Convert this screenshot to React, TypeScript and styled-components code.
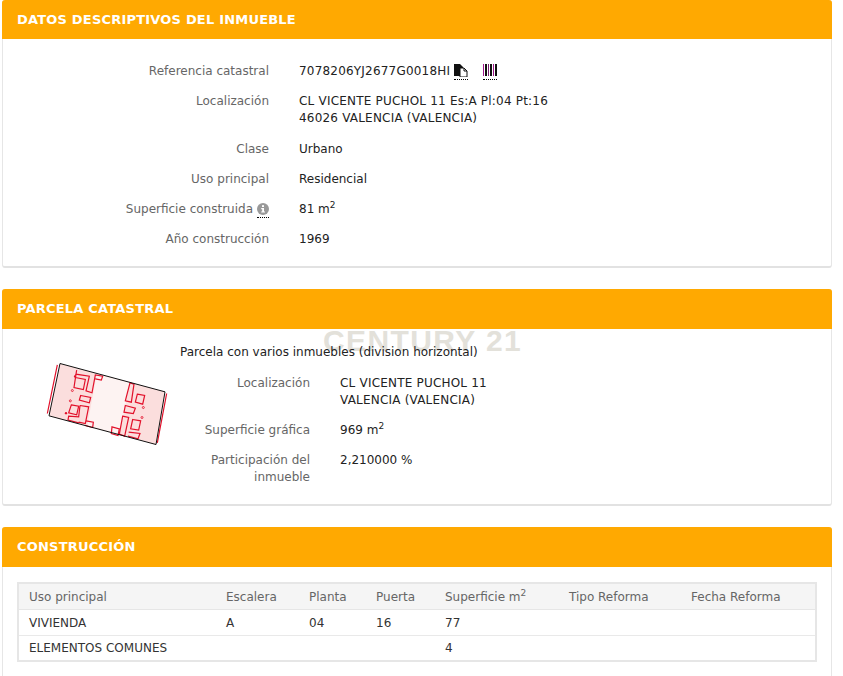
import React from "react";
import styled, { createGlobalStyle } from "styled-components";

const Global = createGlobalStyle`
  html, body { margin: 0; padding: 0; background: #fff; }
  body { font-family: "DejaVu Sans", Verdana, sans-serif; font-size: 12px; color: #222; }
  #root { overflow: hidden; height: 676px; }
`;
const Page = styled.div`
  position: relative;
  width: 830px;
  margin-left: 2px;
  display: flex;
  flex-direction: column;
  gap: 21px;
`;
const Card = styled.section<{ $h: number }>`
  height: ${(p) => p.$h}px;
  box-sizing: border-box;
  background: #fff;
  border: 1px solid #e6e6e6;
  border-top: 0;
  border-bottom: 2px solid #e2e2e2;
  border-radius: 3px;
  flex: none;
`;
const Header = styled.h2<{ $h: number }>`
  margin: 0 -1px;
  height: ${(p) => p.$h}px;
  background: #ffa901;
  color: #fff;
  font-size: 13px;
  font-weight: 700;
  letter-spacing: 0.2px;
  line-height: ${(p) => p.$h}px;
  padding-left: 15px;
  border-radius: 3px 3px 0 0;
`;
const Rows = styled.div<{ $left: number; $top: number; $label: number }>`
  display: grid;
  grid-template-columns: ${(p) => p.$label}px 1fr;
  column-gap: 30px;
  row-gap: 13px;
  padding: ${(p) => p.$top}px 0 0 ${(p) => p.$left}px;
  line-height: 17px;
`;
const Label = styled.div`
  color: #666;
  text-align: right;
`;
const Value = styled.div`
  color: #222;
  white-space: nowrap;
`;
const Caps = styled.span`
  letter-spacing: 0.2px;
`;
const Address = styled(Value)`
  letter-spacing: 0.2px;
  padding-bottom: 1px;
`;
const RefRow = styled.span`
  display: inline-flex;
  align-items: center;
`;
const IconLink = styled.span<{ $ml: number }>`
  display: inline-flex;
  margin-left: ${(p) => p.$ml}px;
  padding-bottom: 2px;
  border-bottom: 1px dotted #000;
  height: 13px;
`;
const Sup = styled.sup`
  font-size: 9px;
  line-height: 0;
`;
const InfoTip = styled.span`
  display: inline-flex;
  margin-left: 4px;
  vertical-align: -2px;
  padding-bottom: 2px;
  border-bottom: 1px dotted #000;
`;
const ParcelBody = styled.div`
  display: flex;
  align-items: flex-start;
`;
const MapBox = styled.div`
  width: 177px;
  flex: none;
  padding: 31px 0 0 42px;
  box-sizing: border-box;
`;
const ParcelText = styled.div`
  flex: 1;
  padding-top: 15px;
`;
const Note = styled.div`
  position: relative;
  z-index: 1;
  line-height: 17px;
  margin-bottom: 14px;
  color: #222;
`;
const Watermark = styled.div`
  position: absolute;
  left: 321px;
  top: 324px;
  font-family: "Liberation Sans", Arial, sans-serif;
  font-weight: 700;
  font-size: 30px;
  line-height: 34px;
  letter-spacing: 1.4px;
  color: #e3e1da;
  white-space: nowrap;
  pointer-events: none;
`;
const TableWrap = styled.div`
  padding: 15px 14px 0;
`;
const Table = styled.table`
  width: 800px;
  border-collapse: collapse;
  table-layout: fixed;
  border: 2px solid #e6e6e6;
`;
const Th = styled.th<{ $w: number }>`
  width: ${(p) => p.$w}px;
  height: 26px;
  padding: 1px 0 0 10px;
  box-sizing: border-box;
  background: #f5f5f5;
  border-bottom: 1px solid #e6e6e6;
  color: #666;
  font-weight: 400;
  text-align: left;
`;
const Td = styled.td`
  height: 26px;
  padding: 1px 0 0 10px;
  box-sizing: border-box;
  border-bottom: 1px solid #e9e9e9;
  color: #333;
`;

const CopyIcon = () => (
  <svg width="14" height="13" viewBox="0 0 14 13">
    <path d="M0 0h6l3 3v9H0z" fill="#111" />
    <path d="M6 4h4l3 3v6H6z" fill="#fff" stroke="#111" strokeWidth="1" />
    <path d="M10 4v3h3" fill="none" stroke="#111" />
  </svg>
);
const BarcodeIcon = () => (
  <svg width="14" height="13" viewBox="0 0 14 13">
    <rect x="0" width="1" height="12" fill="#a0148c" />
    <rect x="2" width="2" height="12" fill="#111" />
    <rect x="5" width="1" height="12" fill="#7a2070" />
    <rect x="7" width="2" height="12" fill="#111" />
    <rect x="10" width="1" height="12" fill="#a0148c" />
    <rect x="12" width="2" height="12" fill="#111" />
  </svg>
);
const InfoIcon = () => (
  <svg width="12" height="12" viewBox="0 0 12 12">
    <circle cx="6" cy="6" r="6" fill="#999" />
    <rect x="5" y="2.2" width="2" height="1.8" fill="#fff" />
    <path d="M4.2 5h2.8v3.4h1v1.2H4.2V8.4h1V6.2h-1z" fill="#fff" />
  </svg>
);
const ParcelMap = () => (
  <svg width="125" height="87" viewBox="45 30 375 260">
    <path d="M90 40 405 125 378 283 57 197z" fill="#fbdedd" />
    <path d="M200 72 300 98 268 252 172 225z" fill="#fdf3f2" />
    <g fill="none" stroke="#e2102a" strokeWidth="3.6">
      <path d="M82 44 52 190M410 130 382 278" />
      <path d="M140 60 138 72 178 78 168 122 186 128 196 74 218 78 214 90 196 86" />
      <path d="M138 72 132 112 160 118 166 88 136 82" />
      <path d="M152 136 182 142 178 158 148 150z" />
      <path d="M124 164 146 168 140 194 116 188z" />
      <path d="M150 166 176 170 166 220 146 216 M150 166 146 200 116 198 114 210 146 218" />
      <path d="M168 212 190 216 188 232 166 226" />
      <path d="M300 98 312 102 304 156 286 152z" />
      <path d="M322 132 344 136 338 162 316 156z" />
      <path d="M286 166 316 174 310 190 282 186z" />
      <path d="M278 198 296 202 284 258 268 252z" />
      <path d="M308 208 332 212 326 240 302 236z" />
      <path d="M296 246 330 250 324 266 294 258" />
      <path d="M246 230 268 236 264 256 244 250z" />
      <circle cx="127" cy="121" r="3" strokeWidth="2.5" />
      <circle cx="121" cy="152" r="3" strokeWidth="2.5" />
      <circle cx="340" cy="172" r="3" strokeWidth="2.5" />
      <circle cx="336" cy="202" r="3" strokeWidth="2.5" />
    </g>
    <circle cx="135" cy="79" r="3.5" fill="#e2102a" />
    <circle cx="108" cy="189" r="3.5" fill="#e2102a" />
    <path d="M90 40 405 125 378 283 57 197z" fill="none" stroke="#111" strokeWidth="3" />
  </svg>
);

const cols: [string, number][] = [
  ["Uso principal", 198],
  ["Escalera", 83],
  ["Planta", 67],
  ["Puerta", 69],
  ["Superficie", 124],
  ["Tipo Reforma", 122],
  ["Fecha Reforma", 135],
];

export default function App() {
  return (
    <>
      <Global />
      <Page>
        <Card $h={268}>
          <Header $h={39}>DATOS DESCRIPTIVOS DEL INMUEBLE</Header>
          <Rows $left={0} $top={24} $label={266}>
            <Label>Referencia catastral</Label>
            <Value>
              <RefRow>
                <Caps>7078206YJ2677G0018HI</Caps>
                <IconLink $ml={4}><CopyIcon /></IconLink>
                <IconLink $ml={15}><BarcodeIcon /></IconLink>
              </RefRow>
            </Value>
            <Label>Localización</Label>
            <Address>
              CL VICENTE PUCHOL 11 Es:A Pl:04 Pt:16
              <br />
              46026 VALENCIA (VALENCIA)
            </Address>
            <Label>Clase</Label>
            <Value>Urbano</Value>
            <Label>Uso principal</Label>
            <Value>Residencial</Value>
            <Label>
              Superficie construida
              <InfoTip><InfoIcon /></InfoTip>
            </Label>
            <Value>
              81 m<Sup>2</Sup>
            </Value>
            <Label>Año construcción</Label>
            <Value>1969</Value>
          </Rows>
        </Card>
        <Card $h={217}>
          <Header $h={40}>PARCELA CATASTRAL</Header>
          <ParcelBody>
            <MapBox><ParcelMap /></MapBox>
            <ParcelText>
              <Note>Parcela con varios inmuebles (division horizontal)</Note>
              <Rows $left={0} $top={0} $label={130}>
                <Label>Localización</Label>
                <Value>
                  <Caps>CL VICENTE PUCHOL 11</Caps>
                  <br />
                  <Caps>VALENCIA (VALENCIA)</Caps>
                </Value>
                <Label>Superficie gráfica</Label>
                <Value>
                  969 m<Sup>2</Sup>
                </Value>
                <Label>
                  Participación del
                  <br />
                  inmueble
                </Label>
                <Value>2,210000 %</Value>
              </Rows>
            </ParcelText>
          </ParcelBody>
        </Card>
        <Card $h={160}>
          <Header $h={40}>CONSTRUCCIÓN</Header>
          <TableWrap>
            <Table>
              <thead>
                <tr>
                  {cols.map(([name, w]) => (
                    <Th key={name} $w={w}>
                      {name === "Superficie" ? (
                        <>
                          Superficie m<Sup>2</Sup>
                        </>
                      ) : (
                        name
                      )}
                    </Th>
                  ))}
                </tr>
              </thead>
              <tbody>
                <tr>
                  <Td>VIVIENDA</Td><Td>A</Td><Td>04</Td><Td>16</Td><Td>77</Td><Td /><Td />
                </tr>
                <tr>
                  <Td>ELEMENTOS COMUNES</Td><Td /><Td /><Td /><Td>4</Td><Td /><Td />
                </tr>
              </tbody>
            </Table>
          </TableWrap>
        </Card>
        <Watermark>CENTURY 21</Watermark>
      </Page>
    </>
  );
}
